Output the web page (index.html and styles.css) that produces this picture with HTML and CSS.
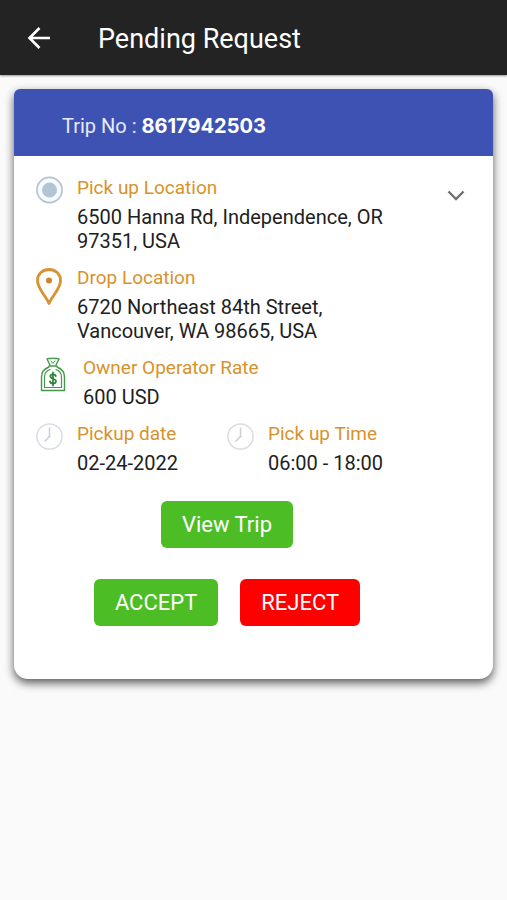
FILE: index.html
```html
<!DOCTYPE html>
<html lang="en">
	<head>
		<meta charset="utf-8">
		<meta name="viewport" content="width=device-width, initial-scale=1">
		<title>Pending Request</title>
		<link rel="stylesheet" href="styles.css">
	</head>
	<body>
		<header class="app-bar">
			<button type="button" class="icon-btn back" aria-label="Back">
				<svg width="24" height="24" viewBox="0 0 24 24" fill="none" stroke="#fff" stroke-width="2.6">
					<path d="M23 12H3M12.500 2L2.500 12L12.500 22"/>
				</svg>
			</button>
			<h1>Pending Request</h1>
		</header>

		<main class="card">
			<h2 class="card-head">Trip No : <strong>8617942503</strong></h2>
			<div class="card-body">
				<div class="details">
					<div class="item">
						<svg class="icon" width="28" height="28" viewBox="0 0 28 28">
							<circle cx="13.500" cy="14" r="12.600" fill="#f7fafc" stroke="#b3c1d0" stroke-width="1.600"/>
							<circle cx="13.500" cy="14" r="7.500" fill="#b0c6d6"/>
						</svg>
						<div class="text">
							<h3>Pick up Location</h3>
							<p>6500 Hanna Rd, Independence, OR 97351, USA</p>
						</div>
					</div>

					<div class="item">
						<svg class="icon" width="28" height="40" viewBox="0 0 28 40">
							<path d="M13 37.500C10 30 1.500 23 1.500 14.500C1.500 8 6.500 3.500 13 3.500S24.500 8 24.500 14.500C24.500 23 16 30 13 37.500Z" fill="none" stroke="#d8932f" stroke-width="2.800" stroke-linejoin="round"/>
							<circle cx="13" cy="14.500" r="3" fill="#cf8526"/>
						</svg>
						<div class="text">
							<h3>Drop Location</h3>
							<p>6720 Northeast 84th Street, Vancouver, WA 98665, USA</p>
						</div>
					</div>

					<div class="item">
						<svg class="icon wide" width="34" height="36" viewBox="0 0 34 36" fill="none" stroke="#43984a" stroke-width="1.400" stroke-linejoin="round" stroke-linecap="round">
							<path d="M14 9L11 3C13 1.500 14.500 3.500 17 2C19.500 3.500 21 1.500 23 3L20 9"/>
							<path d="M15 5L17 7.500L19 5" stroke-width="1"/>
							<path d="M13 10H21"/>
							<path d="M13 11C8 13 5.500 17 5.500 21V34.500H28.500V21C28.500 17 26 13 21 11"/>
							<path d="M14 13.500C10 15 8.500 18 8.500 21V31.500H25.500V21C25.500 18 24 15 20 13.500" stroke-width="1.200"/>
							<path d="M19.800 20C19.300 17.800 14.300 17.500 14.300 20.300C14.300 23.200 20 22.300 20 25.300C20 28.300 14.500 28 14 25.500M17 16.500V29.500" stroke="#2f8437" stroke-width="1.800"/>
						</svg>
						<div class="text">
							<h3>Owner Operator Rate</h3>
							<p>600 USD</p>
						</div>
					</div>

					<div class="row">
						<div class="item">
							<svg class="icon" width="28" height="28" viewBox="0 0 28 28" fill="none" stroke="#d9dce3" stroke-width="1.500">
								<circle cx="13.500" cy="14.500" r="12.600"/>
								<path d="M13.500 5.500V14.500L8.500 19.500" stroke="#c8cee0"/>
								<circle cx="13.500" cy="14.500" r="1" fill="#c8cee0" stroke="none"/>
							</svg>
							<div class="text">
								<h3>Pickup date</h3>
								<p>02-24-2022</p>
							</div>
						</div>
						<div class="item">
							<svg class="icon" width="28" height="28" viewBox="0 0 28 28" fill="none" stroke="#dcdcdc" stroke-width="1.500">
								<circle cx="13.500" cy="14.500" r="12.600"/>
								<path d="M13.500 5.500V14.500L8.500 19.500" stroke="#cdcfd0"/>
								<circle cx="13.500" cy="14.500" r="1" fill="#cdcfd0" stroke="none"/>
							</svg>
							<div class="text">
								<h3>Pick up Time</h3>
								<p>06:00 - 18:00</p>
							</div>
						</div>
					</div>

					<div class="actions">
						<button type="button" class="btn">View Trip</button>
						<div class="choices">
							<button type="button" class="btn">ACCEPT</button>
							<button type="button" class="btn reject">REJECT</button>
						</div>
					</div>
				</div>

				<button type="button" class="icon-btn toggle" aria-label="Collapse trip">
					<svg width="18" height="12" viewBox="0 0 18 12" fill="none" stroke="#707070" stroke-width="2.400">
						<path d="M1.500 1.500L9 9L16.500 1.500"/>
					</svg>
				</button>
			</div>
		</main>
	</body>
</html>
```

FILE: styles.css
```css
* {
	box-sizing: border-box;
}

body {
	margin: 0;
	font-family: Roboto, "Liberation Sans", sans-serif;
	font-size: 20px;
	line-height: 24px;
	background: #fafafa;
	color: #212121;
}

h1, h2, h3, p {
	margin: 0;
	font-weight: 400;
}

button {
	font: inherit;
	border: 0;
	cursor: pointer;
}

.app-bar {
	display: flex;
	align-items: center;
	gap: 47px;
	height: 75px;
	padding: 0 27px;
	background: #232323;
	color: #fff;
	box-shadow: 0 1px 2px rgba(0, 0, 0, 0.4);
}

.app-bar h1 {
	font-size: 27px;
	line-height: 32px;
	padding-top: 2px;
}

.icon-btn {
	display: flex;
	padding: 0;
	background: none;
}

.card {
	margin: 14px;
	background: #fff;
	border-radius: 6px 6px 14px 14px;
	box-shadow: 0 4px 10px rgba(0, 0, 0, 0.65);
}

.card-head {
	padding: 25px 48px 18px;
	font-size: 20px;
	line-height: 24px;
	background: #3e52b4;
	color: #e8ebfa;
	border-radius: 6px 6px 0 0;
}

.card-head strong {
	font-family: Inter, Roboto, sans-serif;
	font-size: 20px;
	font-weight: 700;
	line-height: 20px;
	color: #fff;
}

.card-body {
	display: flex;
	align-items: flex-start;
	padding: 20px 28px 53px 0;
}

.details {
	display: flex;
	flex-direction: column;
	flex: 1;
	gap: 13px;
}

.item {
	display: flex;
	align-items: flex-start;
	gap: 13px;
	padding: 0 20px 0 22px;
}

.icon {
	flex: none;
}

.text h3 {
	margin-bottom: 5px;
	font-size: 19px;
	color: #d8922b;
}

.row {
	display: grid;
	grid-template-columns: 191px 1fr;
}

.toggle {
	margin: 14px 0 0 7px;
}

.actions {
	display: flex;
	flex-direction: column;
	align-items: center;
	gap: 31px;
	padding-top: 13px;
}

.choices {
	display: flex;
	gap: 22px;
}

.btn {
	padding: 11px 21px 10px;
	font-size: 22px;
	line-height: 26px;
	color: #fff;
	background: #4dbd26;
	border-radius: 6px;
}

.btn.reject {
	background: #fe0000;
}
```
